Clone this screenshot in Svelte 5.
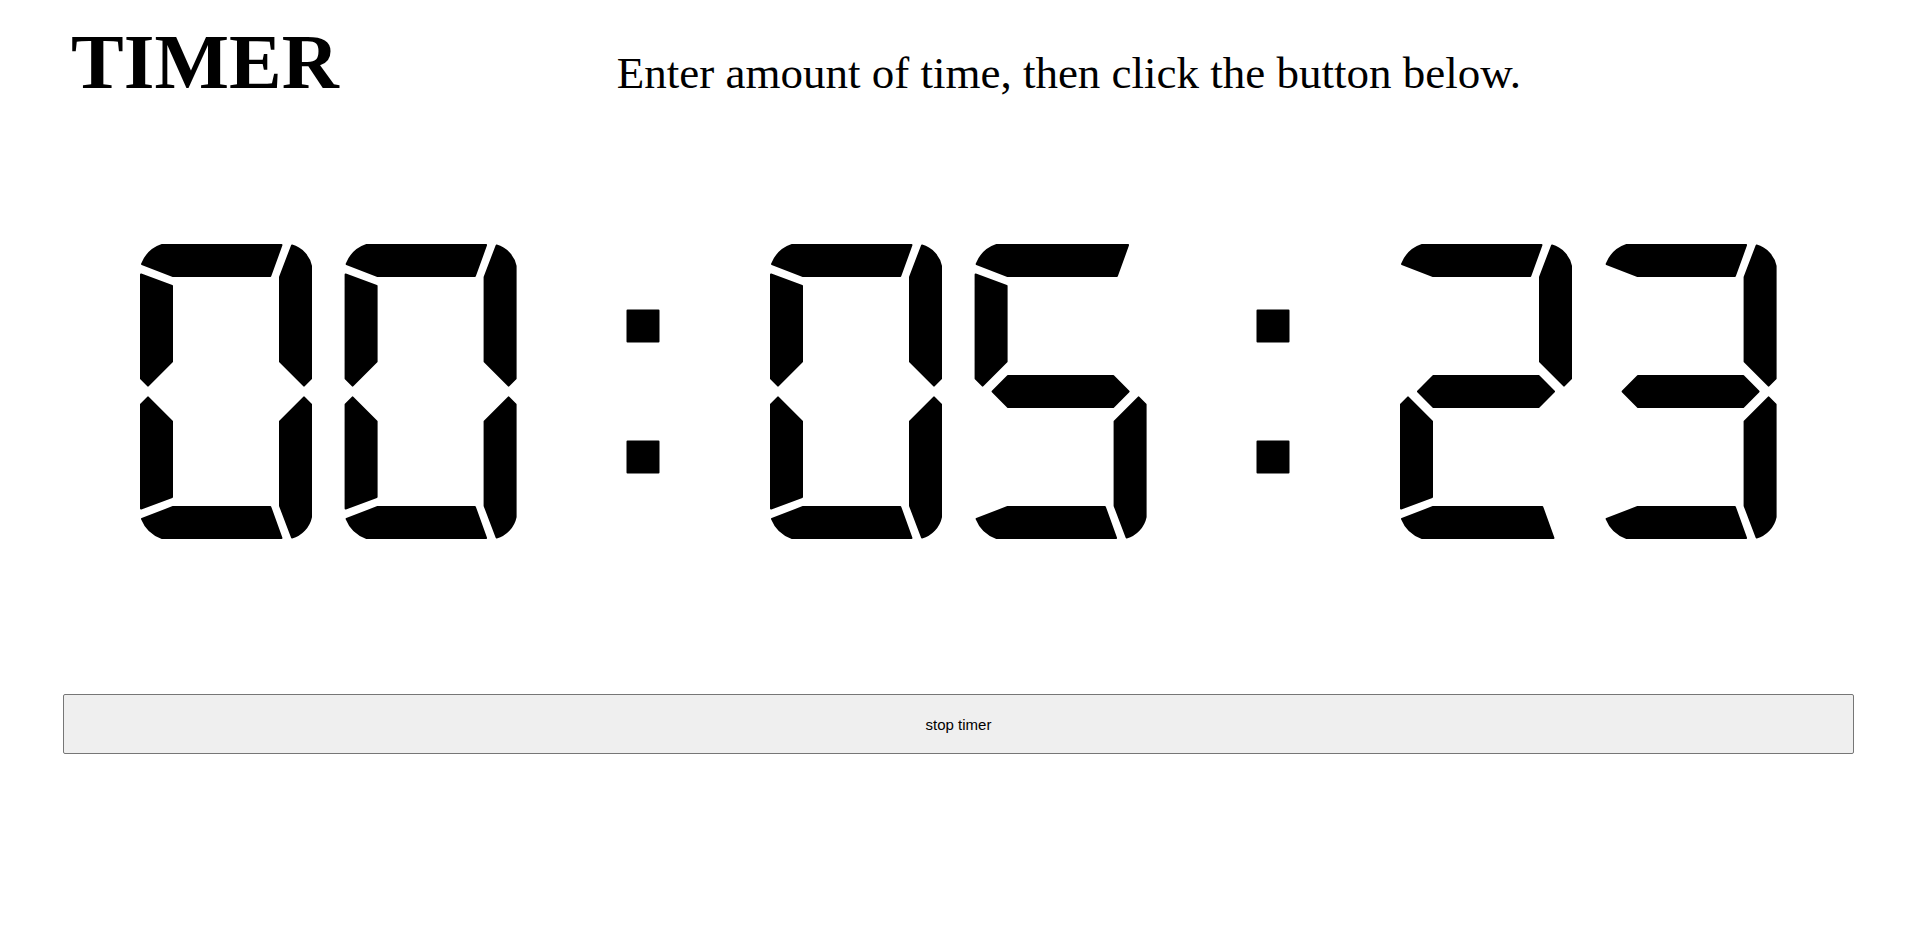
<script>
  let remaining = $state(323);
  let running = $state(true);

  // A and D are the long top and bottom bars, used where no side bar meets their right end.
  const segments = {
    a: 'M2 20C6 10 13 4 22 1H141.500L130.300 32H33Z',
    A: 'M2 20C6 10 13 4 22 1H153.500L142.300 32H33Z',
    b: 'M152 1.500C161 4 169 12 171 22V134.600L164 141.600L140 117.600V33.200Z',
    c: 'M171 160.400L164 153.400L140 177.400V261.800L152 293.500C161 291 169 283 171 273Z',
    d: 'M2 275C6 285 13 291 22 294H141.500L130.300 263H33Z',
    D: 'M2 275C6 285 13 291 22 294H153.500L142.300 263H33Z',
    e: 'M1 264.600L32 253V177.400L8 153.400L1 160.400Z',
    f: 'M1 30.400L32 42V117.600L8 141.600L1 134.600Z',
    g: 'M33.400 132H138.600L154 147.500L138.600 163H33.400L18 147.500Z'
  };
  const lit = ['abcdef', 'bc', 'abgeD', 'abgcd', 'fgbc', 'Afgcd', 'Afgedc', 'abc', 'abcdefg', 'abcdfg'];
  const places = [0, 204.6, 630, 834.6, 1260, 1464.6];
  const colons = [487.500, 1117.500];

  const pad = (n) => String(n).padStart(2, '0');
  const hours = $derived(pad(Math.floor(remaining / 3600)));
  const minutes = $derived(pad(Math.floor(remaining / 60) % 60));
  const seconds = $derived(pad(remaining % 60));
  const digits = $derived([...(hours + minutes + seconds)].map(Number));

  function toggle() {
    running = !running;
  }
</script>

<main>
  <header>
    <h1>TIMER</h1>
    <p>Enter amount of time, then click the button below.</p>
  </header>

  <div class="display">
    <svg viewBox="0 0 1637 295" role="img" aria-label="{hours}:{minutes}:{seconds}">
      {#each places as x, i}
        <g transform="translate({x} 0)">
          {#each lit[digits[i]] as name}
            <path d={segments[name]} />
          {/each}
        </g>
      {/each}
      {#each colons as x}
        <rect {x} y="66.5" width="31" height="31" />
        <rect {x} y="197.5" width="31" height="31" />
      {/each}
    </svg>
  </div>

  <button type="button" onclick={toggle}>{running ? 'stop timer' : 'start timer'}</button>
</main>

<style>
  :global(body) {
    margin: 0;
    background: #fff;
    color: #000;
    font-family: "Liberation Serif", "Times New Roman", serif;
  }

  main {
    display: flex;
    flex-direction: column;
    padding: 16px 63px;
  }

  header {
    display: flex;
    flex-wrap: wrap;
    align-items: baseline;
    column-gap: 278px;
    padding: 0 8px;
  }

  h1 {
    margin: 0;
    font-size: 79px;
    line-height: 92px;
    font-weight: bold;
  }

  p {
    margin: 0;
    font-size: 45px;
    line-height: 56px;
  }

  .display {
    padding: 136px 77px 155px;
  }

  svg {
    display: block;
    width: 100%;
    height: auto;
    fill: #000;
    stroke: #000;
    stroke-width: 2px;
    stroke-linejoin: round;
  }

  button {
    height: 60px;
    border: 1px solid #767676;
    border-radius: 2px;
    background: #efefef;
    color: #000;
    font-family: "Liberation Sans", Arial, sans-serif;
    font-size: 15px;
  }
</style>
